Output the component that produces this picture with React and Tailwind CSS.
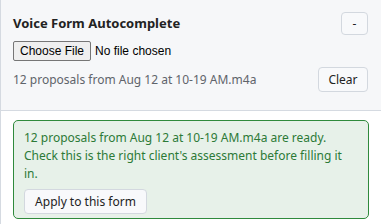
const App = () => {
    return (
        <div className="w-[381px] h-[224px] overflow-hidden bg-white border-l border-[#d5dae1] font-['Noto_Sans',sans-serif]">
            <div className="bg-[#f6f7f9] border-b border-[#d5dae1] pl-3 pr-[13px] pt-3 pb-[18px]">
                <div className="flex items-center justify-between h-[23px]">
                    <h2 className="text-[13px] leading-none font-bold text-[#222]">Voice Form Autocomplete</h2>
                    <button className="w-[27px] h-[23px] rounded-[4px] border border-[#d3d8df] bg-[#f8f9fb] text-[12px] leading-none text-[#222]">
                        -
                    </button>
                </div>
                <div className="mt-[6px] h-[20px]">
                    <input
                        type="file"
                        className="block leading-none font-['Liberation_Sans',Arial,sans-serif] text-[12px] text-black file:mr-[4px] file:h-[20px] file:px-[6px] file:border file:border-[#767676] file:rounded-[2px] file:bg-[#efefef] file:text-black"
                    />
                </div>
                <div className="mt-[6px] flex items-center justify-between h-[25px]">
                    <span className="text-[12px] leading-none text-[#5f646b]">12 proposals from Aug 12 at 10-19 AM.m4a</span>
                    <button className="w-[50px] h-[25px] rounded-[4px] border border-[#d3d8df] bg-[#f8f9fb] text-[12px] leading-none text-[#222]">
                        Clear
                    </button>
                </div>
            </div>
            <div className="pl-3 pr-3 pt-[9px]">
                <div className="rounded-[5px] border border-[#2f8a3c] bg-[#e7f1e9] pl-[10px] pr-[12px] pt-[8px] pb-[4px]">
                    <p className="text-[12px] leading-[18px] text-[#2c7a37]">
                        12 proposals from Aug 12 at 10-19 AM.m4a are ready. Check this is the right client's assessment before filling it in.
                    </p>
                    <button className="mt-[6px] w-[123px] h-[25px] rounded-[4px] border border-[#d3d8df] bg-[#f8f9fb] text-[12px] leading-none text-[#222]">
                        Apply to this form
                    </button>
                </div>
            </div>
        </div>
    );
};

export default App;
